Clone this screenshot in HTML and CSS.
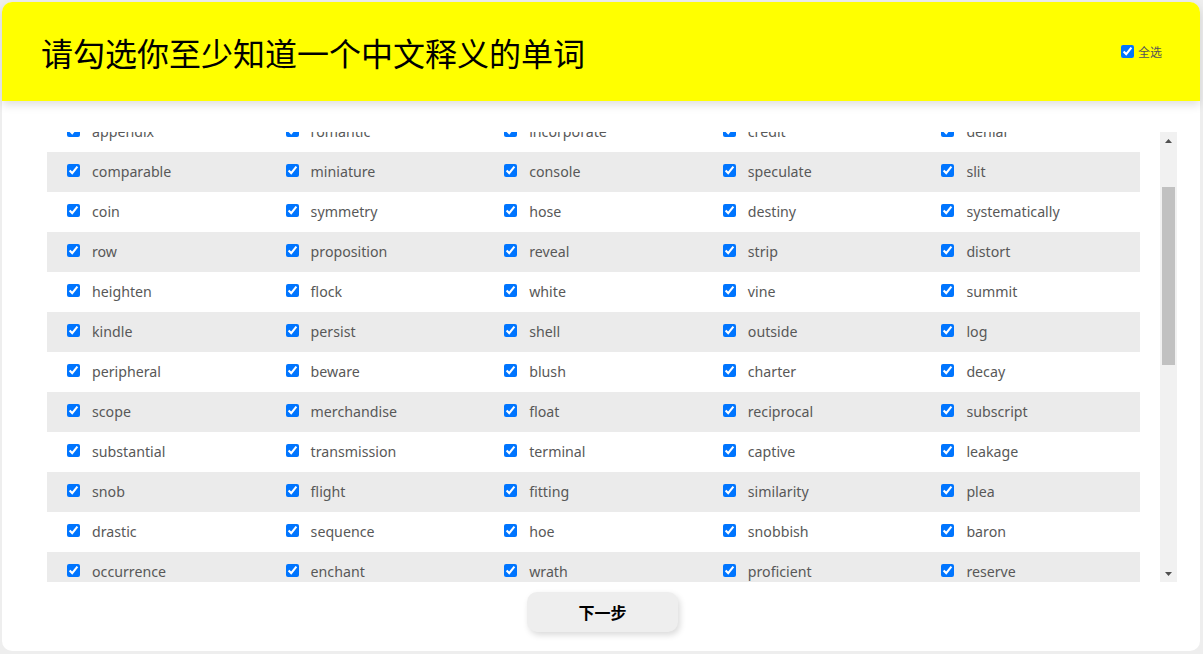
FILE: index.html
```html
<!DOCTYPE html>
<html lang="zh-CN">
<head>
<meta charset="utf-8">
<title>单词选择</title>
<link rel="stylesheet" href="styles.css">
</head>
<body>
<div class="card">
  <header class="header">
    <h1 class="title">请勾选你至少知道一个中文释义的单词</h1>
    <label class="select-all"><input type="checkbox" checked><span>全选</span></label>
  </header>
  <div class="list-area">
    <div class="list" id="list">
      <div class="row"><label class="cell"><input type="checkbox" checked><span>abundant</span></label><label class="cell"><input type="checkbox" checked><span>hollow</span></label><label class="cell"><input type="checkbox" checked><span>dispatch</span></label><label class="cell"><input type="checkbox" checked><span>fragile</span></label><label class="cell"><input type="checkbox" checked><span>linger</span></label></div>
      <div class="row"><label class="cell"><input type="checkbox" checked><span>torment</span></label><label class="cell"><input type="checkbox" checked><span>accord</span></label><label class="cell"><input type="checkbox" checked><span>ripple</span></label><label class="cell"><input type="checkbox" checked><span>garment</span></label><label class="cell"><input type="checkbox" checked><span>verge</span></label></div>
      <div class="row"><label class="cell"><input type="checkbox" checked><span>appendix</span></label><label class="cell"><input type="checkbox" checked><span>romantic</span></label><label class="cell"><input type="checkbox" checked><span>incorporate</span></label><label class="cell"><input type="checkbox" checked><span>credit</span></label><label class="cell"><input type="checkbox" checked><span>denial</span></label></div>
      <div class="row"><label class="cell"><input type="checkbox" checked><span>comparable</span></label><label class="cell"><input type="checkbox" checked><span>miniature</span></label><label class="cell"><input type="checkbox" checked><span>console</span></label><label class="cell"><input type="checkbox" checked><span>speculate</span></label><label class="cell"><input type="checkbox" checked><span>slit</span></label></div>
      <div class="row"><label class="cell"><input type="checkbox" checked><span>coin</span></label><label class="cell"><input type="checkbox" checked><span>symmetry</span></label><label class="cell"><input type="checkbox" checked><span>hose</span></label><label class="cell"><input type="checkbox" checked><span>destiny</span></label><label class="cell"><input type="checkbox" checked><span>systematically</span></label></div>
      <div class="row"><label class="cell"><input type="checkbox" checked><span>row</span></label><label class="cell"><input type="checkbox" checked><span>proposition</span></label><label class="cell"><input type="checkbox" checked><span>reveal</span></label><label class="cell"><input type="checkbox" checked><span>strip</span></label><label class="cell"><input type="checkbox" checked><span>distort</span></label></div>
      <div class="row"><label class="cell"><input type="checkbox" checked><span>heighten</span></label><label class="cell"><input type="checkbox" checked><span>flock</span></label><label class="cell"><input type="checkbox" checked><span>white</span></label><label class="cell"><input type="checkbox" checked><span>vine</span></label><label class="cell"><input type="checkbox" checked><span>summit</span></label></div>
      <div class="row"><label class="cell"><input type="checkbox" checked><span>kindle</span></label><label class="cell"><input type="checkbox" checked><span>persist</span></label><label class="cell"><input type="checkbox" checked><span>shell</span></label><label class="cell"><input type="checkbox" checked><span>outside</span></label><label class="cell"><input type="checkbox" checked><span>log</span></label></div>
      <div class="row"><label class="cell"><input type="checkbox" checked><span>peripheral</span></label><label class="cell"><input type="checkbox" checked><span>beware</span></label><label class="cell"><input type="checkbox" checked><span>blush</span></label><label class="cell"><input type="checkbox" checked><span>charter</span></label><label class="cell"><input type="checkbox" checked><span>decay</span></label></div>
      <div class="row"><label class="cell"><input type="checkbox" checked><span>scope</span></label><label class="cell"><input type="checkbox" checked><span>merchandise</span></label><label class="cell"><input type="checkbox" checked><span>float</span></label><label class="cell"><input type="checkbox" checked><span>reciprocal</span></label><label class="cell"><input type="checkbox" checked><span>subscript</span></label></div>
      <div class="row"><label class="cell"><input type="checkbox" checked><span>substantial</span></label><label class="cell"><input type="checkbox" checked><span>transmission</span></label><label class="cell"><input type="checkbox" checked><span>terminal</span></label><label class="cell"><input type="checkbox" checked><span>captive</span></label><label class="cell"><input type="checkbox" checked><span>leakage</span></label></div>
      <div class="row"><label class="cell"><input type="checkbox" checked><span>snob</span></label><label class="cell"><input type="checkbox" checked><span>flight</span></label><label class="cell"><input type="checkbox" checked><span>fitting</span></label><label class="cell"><input type="checkbox" checked><span>similarity</span></label><label class="cell"><input type="checkbox" checked><span>plea</span></label></div>
      <div class="row"><label class="cell"><input type="checkbox" checked><span>drastic</span></label><label class="cell"><input type="checkbox" checked><span>sequence</span></label><label class="cell"><input type="checkbox" checked><span>hoe</span></label><label class="cell"><input type="checkbox" checked><span>snobbish</span></label><label class="cell"><input type="checkbox" checked><span>baron</span></label></div>
      <div class="row"><label class="cell"><input type="checkbox" checked><span>occurrence</span></label><label class="cell"><input type="checkbox" checked><span>enchant</span></label><label class="cell"><input type="checkbox" checked><span>wrath</span></label><label class="cell"><input type="checkbox" checked><span>proficient</span></label><label class="cell"><input type="checkbox" checked><span>reserve</span></label></div>
      <div class="row"><label class="cell"><input type="checkbox" checked><span>vessel</span></label><label class="cell"><input type="checkbox" checked><span>gloom</span></label><label class="cell"><input type="checkbox" checked><span>thrust</span></label><label class="cell"><input type="checkbox" checked><span>notion</span></label><label class="cell"><input type="checkbox" checked><span>mingle</span></label></div>
      <div class="row"><label class="cell"><input type="checkbox" checked><span>lament</span></label><label class="cell"><input type="checkbox" checked><span>clutch</span></label><label class="cell"><input type="checkbox" checked><span>orbit</span></label><label class="cell"><input type="checkbox" checked><span>humble</span></label><label class="cell"><input type="checkbox" checked><span>tariff</span></label></div>
      <div class="row"><label class="cell"><input type="checkbox" checked><span>verdict</span></label><label class="cell"><input type="checkbox" checked><span>pledge</span></label><label class="cell"><input type="checkbox" checked><span>scrap</span></label><label class="cell"><input type="checkbox" checked><span>rigid</span></label><label class="cell"><input type="checkbox" checked><span>fraction</span></label></div>
      <div class="row"><label class="cell"><input type="checkbox" checked><span>ample</span></label><label class="cell"><input type="checkbox" checked><span>stride</span></label><label class="cell"><input type="checkbox" checked><span>convey</span></label><label class="cell"><input type="checkbox" checked><span>haven</span></label><label class="cell"><input type="checkbox" checked><span>mortal</span></label></div>
      <div class="row"><label class="cell"><input type="checkbox" checked><span>census</span></label><label class="cell"><input type="checkbox" checked><span>glimpse</span></label><label class="cell"><input type="checkbox" checked><span>tender</span></label><label class="cell"><input type="checkbox" checked><span>abolish</span></label><label class="cell"><input type="checkbox" checked><span>drift</span></label></div>
      <div class="row"><label class="cell"><input type="checkbox" checked><span>embark</span></label><label class="cell"><input type="checkbox" checked><span>fertile</span></label><label class="cell"><input type="checkbox" checked><span>latent</span></label><label class="cell"><input type="checkbox" checked><span>prowl</span></label><label class="cell"><input type="checkbox" checked><span>sift</span></label></div>
      <div class="row"><label class="cell"><input type="checkbox" checked><span>barren</span></label><label class="cell"><input type="checkbox" checked><span>cling</span></label><label class="cell"><input type="checkbox" checked><span>devise</span></label><label class="cell"><input type="checkbox" checked><span>hinder</span></label><label class="cell"><input type="checkbox" checked><span>oath</span></label></div>
      <div class="row"><label class="cell"><input type="checkbox" checked><span>quarrel</span></label><label class="cell"><input type="checkbox" checked><span>solemn</span></label><label class="cell"><input type="checkbox" checked><span>trench</span></label><label class="cell"><input type="checkbox" checked><span>usher</span></label><label class="cell"><input type="checkbox" checked><span>wield</span></label></div>
      <div class="row"><label class="cell"><input type="checkbox" checked><span>brisk</span></label><label class="cell"><input type="checkbox" checked><span>dwell</span></label><label class="cell"><input type="checkbox" checked><span>feeble</span></label><label class="cell"><input type="checkbox" checked><span>hurl</span></label><label class="cell"><input type="checkbox" checked><span>nourish</span></label></div>
      <div class="row"><label class="cell"><input type="checkbox" checked><span>plunge</span></label><label class="cell"><input type="checkbox" checked><span>shrewd</span></label><label class="cell"><input type="checkbox" checked><span>tumble</span></label><label class="cell"><input type="checkbox" checked><span>vent</span></label><label class="cell"><input type="checkbox" checked><span>yield</span></label></div>
      <div class="row"><label class="cell"><input type="checkbox" checked><span>bleak</span></label><label class="cell"><input type="checkbox" checked><span>compel</span></label><label class="cell"><input type="checkbox" checked><span>erode</span></label><label class="cell"><input type="checkbox" checked><span>gravel</span></label><label class="cell"><input type="checkbox" checked><span>meadow</span></label></div>
      <div class="row"><label class="cell"><input type="checkbox" checked><span>ponder</span></label><label class="cell"><input type="checkbox" checked><span>rustle</span></label><label class="cell"><input type="checkbox" checked><span>swamp</span></label><label class="cell"><input type="checkbox" checked><span>thrive</span></label><label class="cell"><input type="checkbox" checked><span>zeal</span></label></div>
    </div>
    <div class="scrollbar">
      <div class="sb-btn"><svg width="7" height="4" viewBox="0 0 7 4"><path d="M0 4L3.5 0L7 4Z" fill="#505050"/></svg></div>
      <div class="sb-track"><div class="sb-thumb"></div></div>
      <div class="sb-btn"><svg width="7" height="4" viewBox="0 0 7 4"><path d="M0 0L3.5 4L7 0Z" fill="#505050"/></svg></div>
    </div>
  </div>
  <button class="next" type="button">下一步</button>
</div>
<script src="script.js"></script>
</body>
</html>
```

FILE: styles.css
```css
html, body {
  margin: 0;
}
body {
  padding: 2px;
  background: #eeeeee;
  font-family: "Noto Sans", "Noto Sans CJK SC", sans-serif;
}
.card {
  width: 1198px;
  height: 649px;
  background: #ffffff;
  border-radius: 10px;
  display: flex;
  flex-direction: column;
  align-items: center;
}
.header {
  align-self: stretch;
  box-sizing: border-box;
  height: 99px;
  padding: 0 38px 0 39px;
  background: #ffff00;
  border-radius: 10px 10px 0 0;
  display: flex;
  align-items: center;
  justify-content: space-between;
  box-shadow: 0 4px 10px rgba(0, 0, 0, 0.13);
  position: relative;
  z-index: 1;
}
.title {
  margin: 0;
  font-family: "Noto Sans CJK SC", sans-serif;
  font-size: 32px;
  font-weight: normal;
  color: #000000;
}
.select-all {
  display: flex;
  align-items: center;
  gap: 4px;
  font-family: "Noto Sans CJK SC", sans-serif;
  font-size: 12px;
  color: #555555;
}
.select-all input {
  margin: 0;
  width: 13px;
  height: 13px;
}
.list-area {
  align-self: stretch;
  display: flex;
  gap: 20px;
  margin: 31px 23px 0 45px;
  height: 450px;
}
.list {
  width: 1093px;
  overflow: hidden;
}
.row {
  display: grid;
  grid-template-columns: repeat(5, 1fr);
  height: 40px;
}
.row:nth-child(even) {
  background: #ebebeb;
}
.cell {
  display: flex;
  align-items: center;
  gap: 12px;
  padding-left: 20px;
  font-size: 14.2px;
  color: #585858;
}
.cell span {
  padding-bottom: 2px;
}
.cell input {
  margin: 0 0 3px 0;
  width: 13px;
  height: 13px;
}
.scrollbar {
  width: 17px;
  background: #f1f1f1;
  display: flex;
  flex-direction: column;
}
.sb-btn {
  height: 17px;
  display: flex;
  align-items: center;
  justify-content: center;
}
.sb-track {
  flex: 1;
  padding: 0 2px;
}
.sb-thumb {
  margin-top: 38px;
  height: 178px;
  background: #c1c1c1;
}
.next {
  margin: 10px 0 0 3px;
  width: 151px;
  height: 40px;
  border: none;
  border-radius: 10px;
  background: #eeeeee;
  font-family: "Noto Sans CJK SC", sans-serif;
  font-size: 16px;
  font-weight: bold;
  color: #000000;
  box-shadow: 2px 3px 6px rgba(0, 0, 0, 0.15);
}
```

FILE: script.js
```js
document.getElementById('list').scrollTop = 100;
```
